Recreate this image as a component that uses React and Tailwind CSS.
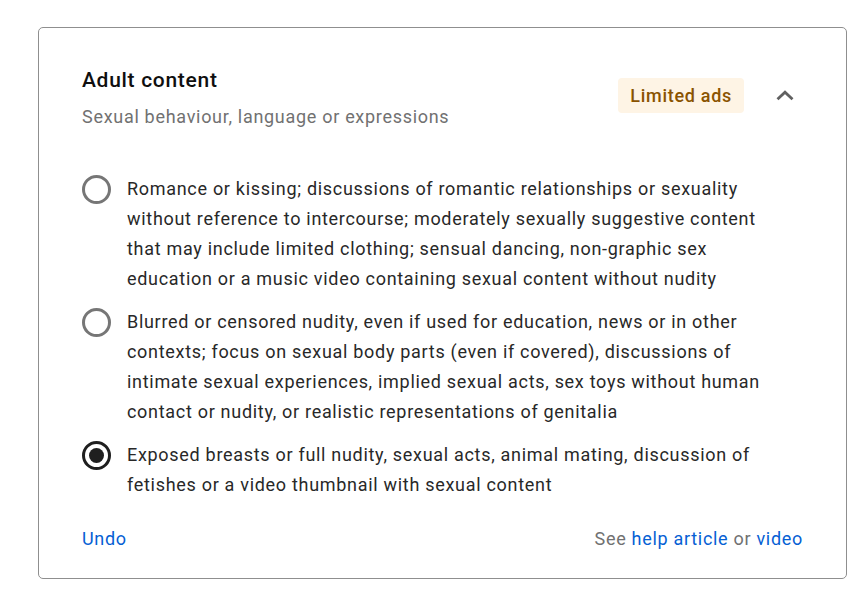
import React, { useState } from "react";

const options = [
  "Romance or kissing; discussions of romantic relationships or sexuality without reference to intercourse; moderately sexually suggestive content that may include limited clothing; sensual dancing, non-graphic sex education or a music video containing sexual content without nudity",
  "Blurred or censored nudity, even if used for education, news or in other contexts; focus on sexual body parts (even if covered), discussions of intimate sexual experiences, implied sexual acts, sex toys without human contact or nudity, or realistic representations of genitalia",
  "Exposed breasts or full nudity, sexual acts, animal mating, discussion of fetishes or a video thumbnail with sexual content",
];

//Radio circle
const Radio = ({ checked }) => (
  <div
    className={`mt-[1px] w-[29px] h-[29px] shrink-0 rounded-full border-[3px] flex items-center justify-center ${
      checked ? "border-[#1f1f1f]" : "border-[#767676]"
    }`}
  >
    {checked && <div className="w-[15px] h-[15px] rounded-full bg-[#1f1f1f]" />}
  </div>
);

const App = () => {
  const [selected, setSelected] = useState(2);

  return (
    <div className="w-[867px] h-[589px] bg-white pt-[27px] pl-[38px] tracking-[0.7px]" style={{ fontFamily: "Roboto, 'Noto Sans', sans-serif" }}>
      <div className="w-[809px] h-[552px] border border-[#8f8f8f] rounded-[5px] px-[43px] pt-[38px]">
        {/* header */}
        <div className="flex items-start justify-between">
          <div>
            <h2 className="text-[21px] leading-[28px] font-medium text-[#0f0f0f]">Adult content</h2>
            <p className="mt-[9px] text-[18px] leading-[28px] text-[#717171]">
              Sexual behaviour, language or expressions
            </p>
          </div>
          <div className="flex items-center mt-[12px] mr-[6px]">
            <span className="h-[35px] px-[12px] flex items-center rounded-[4px] bg-[#fef4e5] text-[18px] font-medium text-[#8a5300]">
              Limited ads
            </span>
            <svg className="ml-[29px]" width="24" height="24" viewBox="0 0 24 24" fill="none">
              <path d="M4.5 15.2l7.5-7 7.5 7" stroke="#606060" strokeWidth="2.8" />
            </svg>
          </div>
        </div>

        {/* options */}
        <div className="mt-[43px] flex flex-col gap-[13px]">
          {options.map((text, i) => (
            <label key={i} className="flex items-start gap-[16px] pr-[24px] cursor-pointer" onClick={() => setSelected(i)}>
              <Radio checked={selected === i} />
              <span className="text-[18px] leading-[30px] text-[#282828]">{text}</span>
            </label>
          ))}
        </div>

        {/* footer */}
        <div className="mt-[25px] flex justify-between text-[18px] leading-[28px]">
          <a className="text-[#065fd4] cursor-pointer">Undo</a>
          <p className="text-[#717171]">
            See <a className="text-[#065fd4] cursor-pointer">help article</a> or{" "}
            <a className="text-[#065fd4] cursor-pointer">video</a>
          </p>
        </div>
      </div>
    </div>
  );
};

export default App;
